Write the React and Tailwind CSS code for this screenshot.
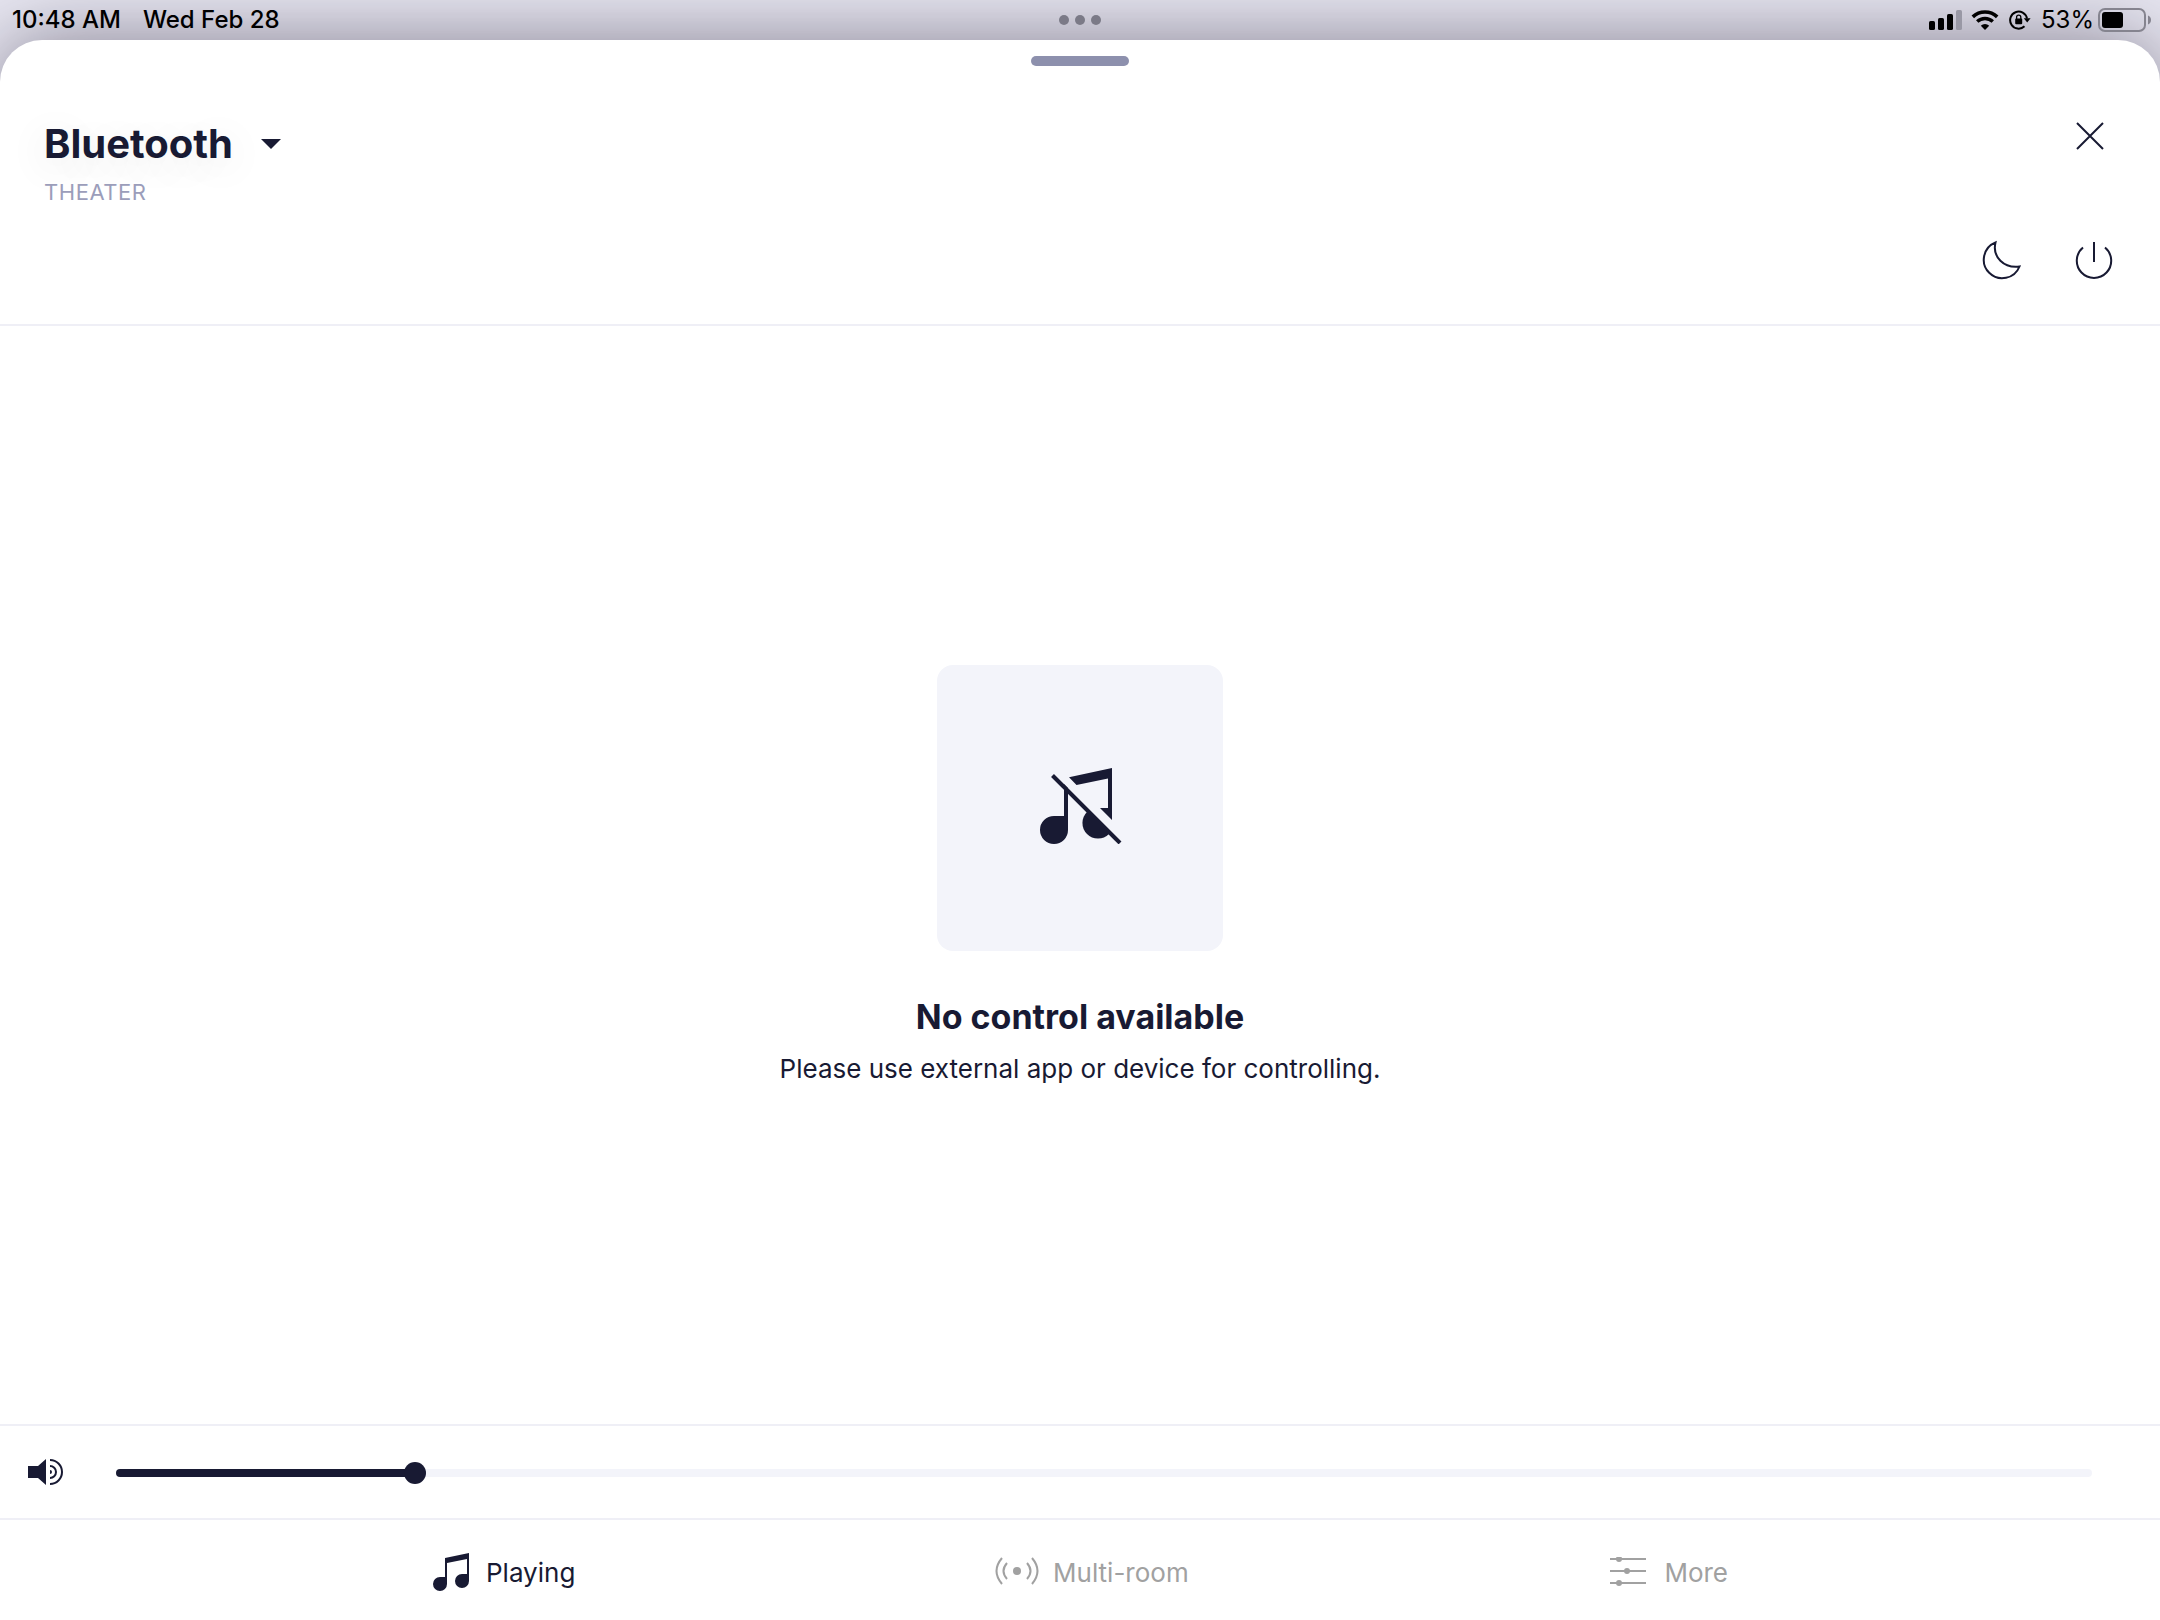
import React, { useState } from "react";

const MAX_VOLUME = 95;

function StatusBar() {
  return (
    <header className="flex h-10 items-center px-3 text-[24px] leading-10 font-medium text-black">
      <div className="flex flex-1 gap-[22px]">
        <span>10:48 AM</span>
        <span>Wed Feb 28</span>
      </div>
      <div className="flex gap-1.5">
        <span className="size-2.5 rounded-full bg-[#7b7a87]" />
        <span className="size-2.5 rounded-full bg-[#7b7a87]" />
        <span className="size-2.5 rounded-full bg-[#7b7a87]" />
      </div>
      <div className="flex flex-1 items-center justify-end">
        <svg width="34" height="20" viewBox="0 0 34 20" aria-label="Signal">
          <rect x="0" y="11" width="6" height="9" rx="1.6" />
          <rect x="9" y="8" width="6" height="12" rx="1.6" />
          <rect x="18" y="4" width="6" height="16" rx="1.6" />
          <rect x="27" y="0" width="6" height="20" rx="1.6" fill="#9998a5" />
        </svg>
        <svg className="ml-2" width="28" height="20" viewBox="0 0 28 20" aria-label="Wi-Fi">
          <path d="M1.8 6.9a17.6 17.6 0 0 1 24.4 0" fill="none" stroke="#000" strokeWidth="3.6" />
          <path d="M6.2 11.6a11.3 11.3 0 0 1 15.6 0" fill="none" stroke="#000" strokeWidth="3.4" />
          <path d="M14 20l-4.2-4.3a6 6 0 0 1 8.4 0z" />
        </svg>
        <svg className="ml-2.5" width="22" height="20" viewBox="0 0 22 20" aria-label="Rotation lock">
          <path d="M15.500 16.300A8.500 8.500 0 1 1 18 8.500" fill="none" stroke="#000" strokeWidth="2" />
          <path d="M14.800 8.200h6.800l-3.400 4.400z" />
          <rect x="6.200" y="8.600" width="7" height="5.600" rx="1" />
          <path d="M7.600 9V7.300a2.100 2.100 0 0 1 4.200 0V9" fill="none" stroke="#000" strokeWidth="1.300" />
        </svg>
        <span className="ml-2.5 font-normal">53%</span>
        <svg className="-mr-1 ml-1" width="54" height="24" viewBox="0 0 54 24" aria-label="Battery">
          <rect x="1" y="1" width="46" height="22" rx="6" fill="none" stroke="#85848f" strokeWidth="2" />
          <rect x="4" y="4" width="21" height="16" rx="3" />
          <path d="M50 7.500c4 1.500 4 7.500 0 9z" fill="#85848f" />
        </svg>
      </div>
    </header>
  );
}

function SheetHeader() {
  return (
    <div className="flex h-[286px] flex-col border-b-2 border-[#efeff6] px-11">
      <div className="mx-auto mt-4 h-2.5 w-[98px] shrink-0 rounded-full bg-[#8d90ad]" />
      <div className="mt-[50px] flex items-start justify-between">
        <div>
          <button
            type="button"
            className="flex h-14 items-center gap-7 text-[40px] font-bold [text-shadow:0_8px_40px_rgba(24,26,51,0.12)]"
          >
            Bluetooth
            <svg width="20" height="10" viewBox="0 0 20 10" fill="currentColor" aria-hidden="true">
              <path d="M0 0h20L10 10z" />
            </svg>
          </button>
          <p className="mt-1 text-[22px] leading-8 tracking-wide text-[#9b9dba]">THEATER</p>
        </div>
        <button type="button" aria-label="Close" className="mt-1.5 mr-3">
          <svg width="28" height="28" viewBox="0 0 28 28" fill="none" stroke="currentColor" strokeWidth="2">
            <path d="M1 1l26 26M27 1L1 27" />
          </svg>
        </button>
      </div>
      <div className="mt-8 flex justify-end gap-13">
        <button type="button" aria-label="Sleep">
          <svg width="42" height="42" viewBox="0 0 42 42" fill="none" stroke="currentColor" strokeWidth="2">
            <path d="M15.500 2.500A18.500 18.500 0 1 0 39.500 26.500C24 28.500 12 17 15.500 2.500z" />
          </svg>
        </button>
        <button type="button" aria-label="Power">
          <svg width="42" height="42" viewBox="0 0 42 42" fill="none" stroke="currentColor" strokeWidth="2">
            <path d="M9 7.500A17.200 17.200 0 1 0 31 7.500M20 2v20" />
          </svg>
        </button>
      </div>
    </div>
  );
}

function EmptyState() {
  return (
    <main className="flex flex-1 flex-col items-center justify-center pt-1 text-center">
      <div className="grid size-[286px] place-items-center rounded-2xl bg-[#f3f4fa] pb-2">
        <svg width="84" height="80" viewBox="0 0 84 80" fill="currentColor" aria-hidden="true">
          <path d="M26 20l4 4v42a14 14 0 1 1-14-14h10z" />
          <path d="M31 13.300L74 4v52L62 44h8V14.500L38.500 21z" />
          <path d="M49 48l22 22A14 14 0 1 1 49 48z" />
          <path d="M14.500 11.500L82 79" stroke="currentColor" strokeWidth="4" />
        </svg>
      </div>
      <h1 className="mt-[46px] text-[34px] leading-10 font-bold">No control available</h1>
      <p className="mt-3 text-[26px] leading-10">Please use external app or device for controlling.</p>
    </main>
  );
}

function VolumeBar() {
  const [volume, setVolume] = useState(14);
  const percent = (volume / MAX_VOLUME) * 100;
  return (
    <div className="flex h-[94px] items-center gap-[52px] border-t-2 border-[#efeff6] pr-[68px] pl-7">
      <svg className="shrink-0" width="36" height="26" viewBox="0 0 36 26" fill="currentColor" aria-hidden="true">
        <path d="M0 7h10l8-7v26l-8-7H0z" />
        <path d="M22 11a2 2 0 0 1 0 4z" />
        <path d="M22 7a6 6 0 0 1 0 12M22 1a12 12 0 0 1 0 24" fill="none" stroke="currentColor" strokeWidth="2" />
      </svg>
      <input
        type="range"
        aria-label="Volume"
        min="0"
        max={MAX_VOLUME}
        value={volume}
        onChange={(event) => setVolume(Number(event.target.value))}
        style={{
          backgroundImage: `linear-gradient(to right, #181a33 ${percent}%, #f3f4fa ${percent}%)`,
        }}
        className="mt-0.5 h-2 min-w-0 flex-1 appearance-none rounded-full [&::-webkit-slider-thumb]:size-[22px] [&::-webkit-slider-thumb]:appearance-none [&::-webkit-slider-thumb]:rounded-full [&::-webkit-slider-thumb]:bg-[#181a33]"
      />
    </div>
  );
}

function TabBar() {
  return (
    <nav className="flex h-[102px] justify-between border-t-2 border-[#efeff6] px-[20%] pt-1 text-[26px] text-[#a1a1a1]">
      <button type="button" aria-current="page" className="flex items-center gap-4 text-[#181a33]">
        <svg width="38" height="40" viewBox="0 0 38 40" fill="currentColor" aria-hidden="true">
          <path d="M13 6l24-5v28a7 7 0 1 1-7-7h5V7L15 11v21a7 7 0 1 1-7-7h5z" />
        </svg>
        Playing
      </button>
      <button type="button" className="flex items-center gap-3">
        <svg width="46" height="30" viewBox="0 0 46 30" fill="none" stroke="currentColor" strokeWidth="2" aria-hidden="true">
          <circle cx="22" cy="14" r="4" fill="currentColor" stroke="none" />
          <path d="M12 6q-7 8 0 16M32 6q7 8 0 16M7 1q-11 13 0 26M37 1q11 13 0 26" />
        </svg>
        Multi-room
      </button>
      <button type="button" className="flex items-center gap-4">
        <svg width="40" height="30" viewBox="0 0 40 30" fill="currentColor" aria-hidden="true">
          <path d="M2 1h36v2H2zM2 13h36v2H2zM2 25h36v2H2z" />
          <circle cx="11" cy="2" r="3" />
          <circle cx="19" cy="14" r="3" />
          <circle cx="11" cy="26" r="3" />
        </svg>
        More
      </button>
    </nav>
  );
}

export default function App() {
  return (
    <div className="flex min-h-screen flex-col overflow-hidden bg-[#e8e7f2] font-['Inter',sans-serif] text-[#181a33]">
      <div className="relative z-10">
        <StatusBar />
      </div>
      <section className="flex flex-1 flex-col rounded-t-[42px] bg-white shadow-[0_0_80px_rgba(10,5,25,0.45)]">
        <SheetHeader />
        <EmptyState />
        <VolumeBar />
        <TabBar />
      </section>
    </div>
  );
}
